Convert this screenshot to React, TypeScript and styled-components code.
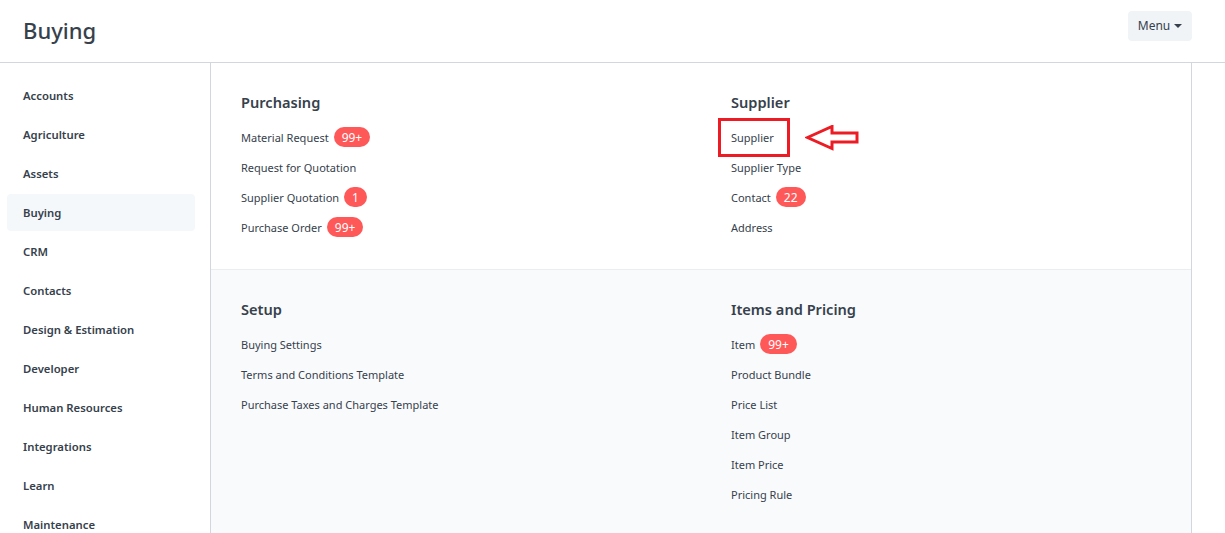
import styled, { createGlobalStyle } from "styled-components";

const GlobalStyle = createGlobalStyle`
  body {
    margin: 0;
    background: #ffffff;
    font-family: "Noto Sans", "Open Sans", sans-serif;
    color: #36414c;
  }
  *, *::before, *::after {
    box-sizing: border-box;
  }
`;

type LinkItem = { label: string; count?: string };
type Group = { title: string; links: LinkItem[] };

const modules = [
  "Accounts",
  "Agriculture",
  "Assets",
  "Buying",
  "CRM",
  "Contacts",
  "Design & Estimation",
  "Developer",
  "Human Resources",
  "Integrations",
  "Learn",
  "Maintenance",
];

const sections: Group[][] = [
  [
    {
      title: "Purchasing",
      links: [
        { label: "Material Request", count: "99+" },
        { label: "Request for Quotation" },
        { label: "Supplier Quotation", count: "1" },
        { label: "Purchase Order", count: "99+" },
      ],
    },
    {
      title: "Supplier",
      links: [
        { label: "Supplier" },
        { label: "Supplier Type" },
        { label: "Contact", count: "22" },
        { label: "Address" },
      ],
    },
  ],
  [
    {
      title: "Setup",
      links: [
        { label: "Buying Settings" },
        { label: "Terms and Conditions Template" },
        { label: "Purchase Taxes and Charges Template" },
      ],
    },
    {
      title: "Items and Pricing",
      links: [
        { label: "Item", count: "99+" },
        { label: "Product Bundle" },
        { label: "Price List" },
        { label: "Item Group" },
        { label: "Item Price" },
        { label: "Pricing Rule" },
      ],
    },
  ],
];

function App() {
  return (
    <>
      <GlobalStyle />
      <Page>
        <Header>
          <Title>Buying</Title>
          <MenuButton>
            Menu <Caret />
          </MenuButton>
        </Header>
        <Body>
          <Sidebar>
            {modules.map((m) => (
              <SidebarItem key={m} $active={m === "Buying"}>
                {m}
              </SidebarItem>
            ))}
          </Sidebar>
          <Main>
            {sections.map((groups, i) => (
              <Section key={i} $shaded={i > 0}>
                {groups.map((g) => (
                  <Column key={g.title}>
                    <Heading>{g.title}</Heading>
                    {g.links.map((l) => (
                      <LinkRow key={l.label}>
                        {g.title === "Supplier" && l.label === "Supplier" ? (
                          <Highlighted>
                            <LinkText>{l.label}</LinkText>
                            <ArrowMark />
                          </Highlighted>
                        ) : (
                          <LinkText>{l.label}</LinkText>
                        )}
                        {l.count && <Badge>{l.count}</Badge>}
                      </LinkRow>
                    ))}
                  </Column>
                ))}
              </Section>
            ))}
          </Main>
        </Body>
      </Page>
    </>
  );
}

export default App;

function ArrowMark() {
  return (
    <ArrowSvg width="56" height="28" viewBox="0 0 56 28">
      <path
        d="M2.5 12.5 L27 1.5 L27 8 L52 8 L52 17 L27 17 L27 23.5 Z"
        fill="none"
        stroke="#ed1c24"
        strokeWidth="3"
        strokeLinejoin="miter"
      />
    </ArrowSvg>
  );
}

const Page = styled.div`
  width: 1225px;
  height: 533px;
  overflow: hidden;
`;

const Header = styled.div`
  height: 63px;
  border-bottom: 1px solid #d1d8dd;
  display: flex;
  align-items: center;
  justify-content: space-between;
  padding: 0 33px 0 23px;
`;

const Title = styled.h1`
  margin: 0;
  font-size: 22px;
  font-weight: 500;
  color: #36414c;
  padding-bottom: 2px;
`;

const MenuButton = styled.button`
  height: 30px;
  width: 64px;
  margin-bottom: 11px;
  border: none;
  border-radius: 4px;
  background: #f0f4f7;
  color: #36414c;
  font-family: inherit;
  font-size: 12px;
  display: flex;
  align-items: center;
  justify-content: center;
  gap: 4px;
  padding: 0;
`;

const Caret = styled.span`
  width: 0;
  height: 0;
  border-left: 4px solid transparent;
  border-right: 4px solid transparent;
  border-top: 4px solid #36414c;
`;

const Body = styled.div`
  display: flex;
  height: 470px;
`;

const Sidebar = styled.div`
  width: 211px;
  flex-shrink: 0;
  border-right: 1px solid #d1d8dd;
  padding: 14px 15px 0 7px;
  display: flex;
  flex-direction: column;
  gap: 2px;
  overflow: hidden;
`;

const SidebarItem = styled.div<{ $active: boolean }>`
  height: 37px;
  flex-shrink: 0;
  display: flex;
  align-items: center;
  padding-left: 16px;
  border-radius: 4px;
  font-size: 11.3px;
  font-weight: 600;
  color: #36414c;
  background: ${(p) => (p.$active ? "#f5f8fb" : "transparent")};
`;

const Main = styled.div`
  width: 981px;
  border-right: 1px solid #d1d8dd;
  display: flex;
  flex-direction: column;
`;

const Section = styled.div<{ $shaded: boolean }>`
  display: grid;
  grid-template-columns: 490px 490px;
  padding: 29px 30px 27px;
  background: ${(p) => (p.$shaded ? "#f9fafc" : "#ffffff")};
  border-top: ${(p) => (p.$shaded ? "1px solid #ebeef0" : "none")};
  flex: ${(p) => (p.$shaded ? 1 : "none")};
`;

const Column = styled.div`
  display: flex;
  flex-direction: column;
`;

const Heading = styled.h3`
  margin: 0 0 10px;
  height: 20px;
  line-height: 20px;
  font-size: 14.6px;
  font-weight: 600;
  color: #36414c;
`;

const LinkRow = styled.div`
  height: 30px;
  display: flex;
  align-items: center;
  gap: 5px;
`;

const LinkText = styled.span`
  font-size: 11px;
  color: #36414c;
`;

const Highlighted = styled.span`
  position: relative;
  height: 30px;
  display: inline-flex;
  align-items: center;
  &::before {
    content: "";
    position: absolute;
    left: -13px;
    top: -4px;
    width: 72px;
    height: 39px;
    border: 3px solid #ed1c24;
  }
`;

const ArrowSvg = styled.svg`
  position: absolute;
  left: 74px;
  top: 3px;
`;

const Badge = styled.span`
  height: 20px;
  min-width: 21px;
  padding: 0 8px;
  border-radius: 10px;
  background: #ff5858;
  color: #ffffff;
  font-size: 12px;
  display: inline-flex;
  align-items: center;
  justify-content: center;
`;
